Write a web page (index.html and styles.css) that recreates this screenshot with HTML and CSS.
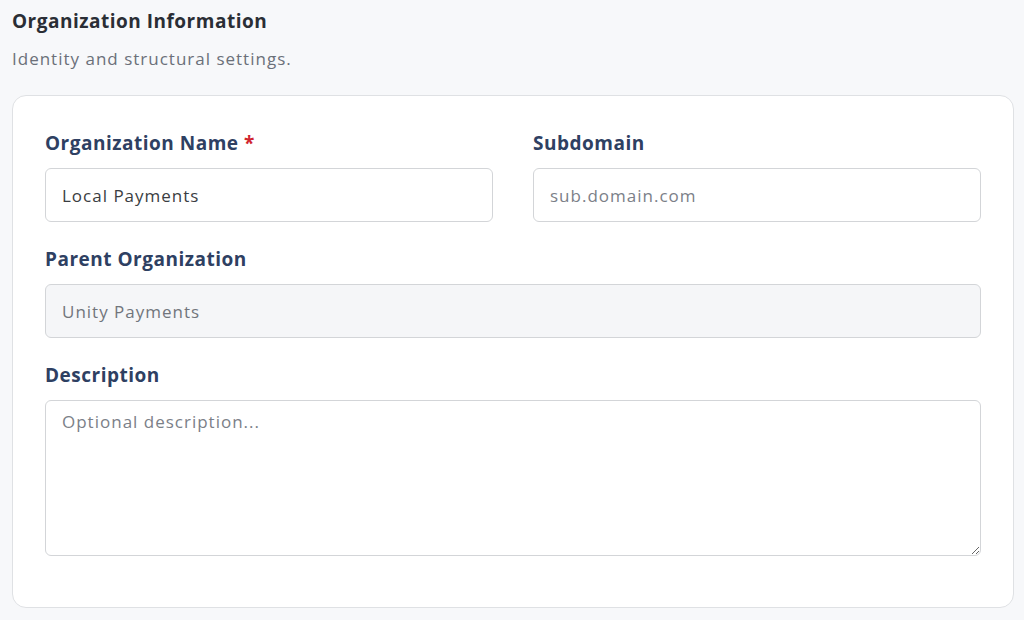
FILE: index.html
```html
<!DOCTYPE html>
<html>
<head>
<meta charset="utf-8">
<link rel="stylesheet" href="styles.css">
</head>
<body>
<header class="section-head">
  <h2 class="section-title">Organization Information</h2>
  <p class="section-sub">Identity and structural settings.</p>
</header>
<div class="card">
  <div class="row two">
    <div class="field">
      <label class="label">Organization Name <span class="req">*</span></label>
      <input class="input" type="text" value="Local Payments">
    </div>
    <div class="field">
      <label class="label">Subdomain</label>
      <input class="input" type="text" placeholder="sub.domain.com">
    </div>
  </div>
  <div class="field">
    <label class="label">Parent Organization</label>
    <input class="input disabled" type="text" value="Unity Payments" disabled>
  </div>
  <div class="field">
    <label class="label">Description</label>
    <textarea class="input textarea" placeholder="Optional description..."></textarea>
  </div>
</div>
</body>
</html>
```
FILE: styles.css
```css
* { box-sizing: border-box; }
html, body { margin: 0; }
body {
  background: #f7f8fa;
  padding: 8px 10px 0 12px;
  font-family: "Open Sans", "Liberation Sans", sans-serif;
  color: #2b2f36;
}
.section-title {
  margin: 0;
  font-size: 19px;
  line-height: 26px;
  font-weight: 700;
  letter-spacing: 0.5px;
  color: #2a2e35;
}
.section-sub {
  margin: 13px 0 0;
  font-size: 17px;
  line-height: 24px;
  letter-spacing: 1px;
  color: #6b7079;
}
.card {
  margin-top: 24px;
  background: #fff;
  border: 1px solid #dfe1e4;
  border-radius: 14px;
  padding: 32px 32px 51px;
  display: flex;
  flex-direction: column;
  gap: 22px;
}
.row.two {
  display: grid;
  grid-template-columns: 1fr 1fr;
  gap: 40px;
}
.field {
  display: flex;
  flex-direction: column;
  gap: 10px;
}
.label {
  font-size: 19px;
  line-height: 30px;
  font-weight: 700;
  letter-spacing: 0.5px;
  color: #2e4062;
}
.req { color: #d0262f; }
.input {
  display: block;
  width: 100%;
  height: 54px;
  border: 1px solid #d3d5d8;
  border-radius: 6px;
  padding: 0 16px;
  font-family: inherit;
  font-size: 17px;
  letter-spacing: 1px;
  color: #3a3d42;
  background: #fff;
  outline: none;
}
.input::placeholder { color: #7b8088; }
.input.disabled {
  background: #f5f6f8;
  color: #71757c;
}
.textarea {
  height: 156px;
  padding: 9px 16px;
  line-height: 24px;
  resize: vertical;
}
```
